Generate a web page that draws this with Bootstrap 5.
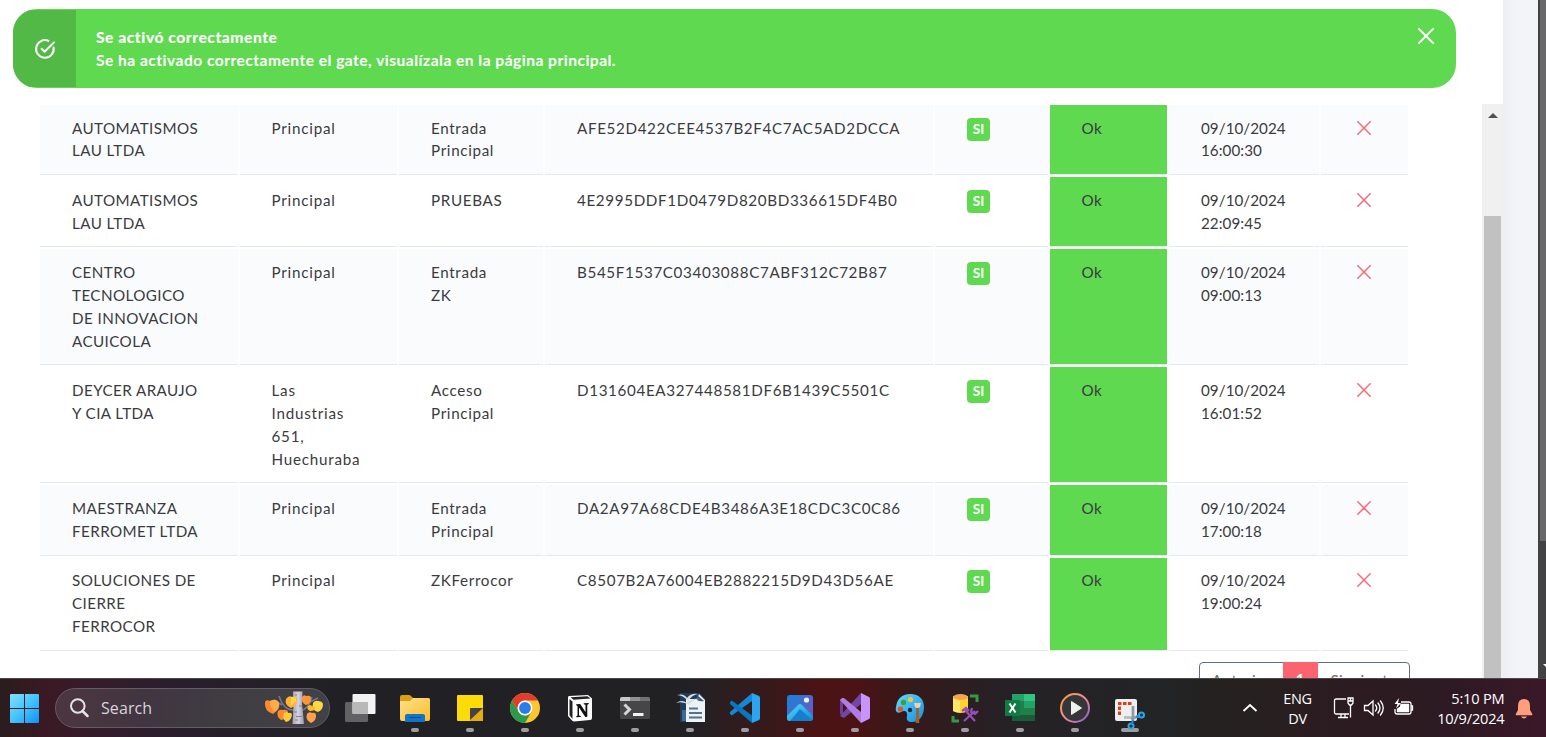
<!DOCTYPE html>
<html lang="es">
<head>
<meta charset="utf-8">
<meta name="viewport" content="width=device-width, initial-scale=1">
<title>Gates</title>
<link href="https://cdn.jsdelivr.net/npm/bootstrap@5.3.0/dist/css/bootstrap.min.css" rel="stylesheet">
<style>
body{font-family:Lato,"Open Sans",sans-serif;font-size:15.2px;line-height:22.9px;color:#3a3b40;background:#fff}
.screen{width:1546px;height:737px;overflow:hidden}
.viewport{height:678px;overflow:hidden}
.page-col{width:1482px}
.notice{margin:9px 0 0 13px;width:1443px;height:79px;border-radius:24px;background:#5fda50;color:#fff;padding:1px 0;overflow:hidden;font-size:15.6px}
.notice-icon{width:63px;background:#52b946}
.notice-text{padding:16px 0 0 20px}
.notice-title{font-weight:900;letter-spacing:.54px}
.notice-body{font-weight:700;letter-spacing:.47px}
.notice-close{margin:18px 22px 0 0;width:16px;height:16px}
.gates{border-collapse:separate;border-spacing:2px;width:1372px;margin:15px 0 0 38px;table-layout:fixed}
.gates td{padding:12px 0 0 32px;vertical-align:top;border-bottom:1px solid #e1e9f1;white-space:nowrap;letter-spacing:.42px}
.gates td:nth-child(2){padding-left:31.5px;letter-spacing:.78px}
.gates td:nth-child(3){letter-spacing:.66px}
.gates td:nth-child(6){padding-left:31.5px}
.gates td:nth-child(7){letter-spacing:.05px}
.gates .serial{letter-spacing:.64px}
.gates tr:first-child td{line-height:22.3px}
.gates tr:last-child td{padding-top:11px}
.gates tr:nth-child(odd) td{background:#fafbfd}
.gates .state,.gates tr:nth-child(odd) .state{background:#5fda50}
.h2l{height:70px}.h2x{height:71px}.h3l{height:93px}.h4l{height:116px}
.gates .yes{display:inline-block;width:23px;height:23px;border-radius:4px;background:#5fda50;color:#fff;font-size:13.6px;font-weight:700;line-height:22px;text-align:center;letter-spacing:0;margin-top:1px}
.gates svg{display:block;margin:4px 0 0 3.5px}
.pager{width:211px;margin:9px 0 0 1199px;height:38px;border:1px solid #5f6f84;border-radius:4px;line-height:34px;color:#6a6f78;letter-spacing:.5px}
.pager .now{width:35px;margin-top:-1px;height:38px;background:#fa6370;color:#fff;font-weight:700}
.pager .side-a{width:83px}.pager .side-b{width:91px}
.inner-scroll{width:21px;margin-top:104px;background:#f0f0f0;height:574px;padding:0 2px}
.inner-arrow{height:112px;padding:9px 0 0 3.5px}
.inner-thumb{width:17px;height:470px;background:#c1c1c1}
.page-edge{width:35px;background:linear-gradient(90deg,#edeef4,#f2f4fa 12px)}
.outer-scroll{width:8px;background:#424242;padding-left:2px}
.outer-thumb{height:541px;background:#686868}
.outer-tip{margin:123px 0 0 3px}
.taskbar{height:59px;border-top:1px solid #4b484b;color:#fff;font-family:"Open Sans","Noto Sans",sans-serif;background:linear-gradient(90deg,#2a1c1f 0,#3a1923 45px,#321c2c 110px,#281f2c 190px,#212125 330px,#212124 690px,#38191a 770px,#4b1314 820px,#4b1314 855px,#35191b 910px,#262125 1000px,#222426 1160px,#25211f 1230px,#2b1c21 1330px,#2d1a22 1450px,#3b1829 1546px)}
.start{margin:15px 16px 0 10px}
.searchbox{width:275px;height:40px;margin-top:9px;border:1px solid #645b64;border-radius:20px;background:linear-gradient(90deg,#4c3640,#413541 90px,#3f3d42 170px,#414246)}
.searchbox .lens{margin:0 12px 0 13px}
.searchbox span{font-size:16px;color:#d8d4d8;letter-spacing:.1px;padding-top:1px}
.searchbox .tree{margin-left:auto;margin-right:5px}
.apps{margin-left:2.5px;width:825.5px}
.app{width:55.03px;padding-top:13px}
.app svg{width:32px;height:32px;overflow:visible;flex:none}
.dot{width:8px;height:4px;border-radius:2px;background:#a09da0;margin-top:4px;flex:none}
.dot.wide{width:18px}
.snip{z-index:1}
.tray{font-size:14.3px;line-height:20px}
.tray svg{flex:none}
.chev{margin:24px 0 0 83.5px}
.lang{width:40px;margin:10px 15px 0 20px;letter-spacing:-.3px;font-size:14.5px}
.net{margin:18px 9px 0 0}.vol{margin:18px 8px 0 -1px}.batt{margin:18px 0 0}
.clock{width:90px;margin-top:9px;letter-spacing:-.2px;font-size:14.6px}
.bell{margin:20px 0 0 10px}
</style>
</head>
<body>
<svg width="0" height="0" class="position-absolute">
<defs>
<linearGradient id="win" x1="0" y1="0" x2="1" y2="1"><stop stop-color="#7fe0ff"/><stop offset=".5" stop-color="#45c3fb"/><stop offset="1" stop-color="#0d92f8"/></linearGradient>
<linearGradient id="fold" x1="0" y1="0" x2="1" y2="1"><stop stop-color="#ffe08a"/><stop offset="1" stop-color="#f8be2c"/></linearGradient>
<linearGradient id="photo" x1="0" y1="0" x2="1" y2="1"><stop stop-color="#1583dc"/><stop offset="1" stop-color="#7c52b8"/></linearGradient>
<linearGradient id="hill" x1="0" y1="0" x2="1" y2="1"><stop stop-color="#52dcfa"/><stop offset="1" stop-color="#1186dc"/></linearGradient>
<linearGradient id="ring" x1="0" y1="0" x2="1" y2="1"><stop stop-color="#ff9b3d"/><stop offset=".5" stop-color="#e89090"/><stop offset="1" stop-color="#8a58d8"/></linearGradient>
<linearGradient id="pal" x1="0" y1="0" x2="1" y2="1"><stop stop-color="#64d8fb"/><stop offset="1" stop-color="#1590e0"/></linearGradient>
<linearGradient id="trunk"><stop stop-color="#a8a4b8"/><stop offset=".5" stop-color="#d6d3e0"/><stop offset="1" stop-color="#9b97ac"/></linearGradient>
<symbol id="cross" viewBox="0 0 14 14"><path d="M.8.8l12.4 12.4M13.2.8.8 13.2" fill="none" stroke="#fb6a76" stroke-width="1.5" stroke-linecap="round"/></symbol>
</defs>
</svg>
<div class="screen d-flex flex-column">
<main class="viewport d-flex">
 <section class="page-col">
  <div class="notice d-flex">
   <div class="notice-icon d-flex align-items-center justify-content-center"><svg width="22" height="22" viewBox="0 0 22 22" fill="none" stroke="#fff" stroke-width="2" stroke-linecap="round" stroke-linejoin="round"><path d="M19.6 9.6a8.8 8.8 0 1 1-5.1-6.7M7.6 10.8l3 3L20 4.4"/></svg></div>
   <div class="notice-text flex-grow-1"><div class="notice-title">Se activó correctamente</div><div class="notice-body">Se ha activado correctamente el gate, visualízala en la página principal.</div></div>
   <svg class="notice-close" viewBox="0 0 16 16"><path d="M1 1l14 14M15 1 1 15" stroke="#fff" stroke-width="1.8" stroke-linecap="round"/></svg>
  </div>
  <table class="gates">
   <colgroup><col style="width:198px"><col style="width:157px"><col style="width:144px"><col style="width:388px"><col style="width:113px"><col style="width:117px"><col style="width:150px"><col style="width:87px"></colgroup>
   <tbody>
   <tr class="h2l"><td>AUTOMATISMOS<br>LAU LTDA</td><td>Principal</td><td>Entrada<br>Principal</td><td class="serial">AFE52D422CEE4537B2F4C7AC5AD2DCCA</td><td><span class="yes">SI</span></td><td class="state">Ok</td><td>09/10/2024<br>16:00:30</td><td><svg width="14" height="14"><use href="#cross"/></svg></td></tr>
   <tr class="h2l"><td>AUTOMATISMOS<br>LAU LTDA</td><td>Principal</td><td>PRUEBAS</td><td class="serial">4E2995DDF1D0479D820BD336615DF4B0</td><td><span class="yes">SI</span></td><td class="state">Ok</td><td>09/10/2024<br>22:09:45</td><td><svg width="14" height="14"><use href="#cross"/></svg></td></tr>
   <tr class="h4l"><td>CENTRO<br>TECNOLOGICO<br>DE INNOVACION<br>ACUICOLA</td><td>Principal</td><td>Entrada<br>ZK</td><td class="serial">B545F1537C03403088C7ABF312C72B87</td><td><span class="yes">SI</span></td><td class="state">Ok</td><td>09/10/2024<br>09:00:13</td><td><svg width="14" height="14"><use href="#cross"/></svg></td></tr>
   <tr class="h4l"><td>DEYCER ARAUJO<br>Y CIA LTDA</td><td>Las<br>Industrias<br>651,<br>Huechuraba</td><td>Acceso<br>Principal</td><td class="serial">D131604EA327448581DF6B1439C5501C</td><td><span class="yes">SI</span></td><td class="state">Ok</td><td>09/10/2024<br>16:01:52</td><td><svg width="14" height="14"><use href="#cross"/></svg></td></tr>
   <tr class="h2x"><td>MAESTRANZA<br>FERROMET LTDA</td><td>Principal</td><td>Entrada<br>Principal</td><td class="serial">DA2A97A68CDE4B3486A3E18CDC3C0C86</td><td><span class="yes">SI</span></td><td class="state">Ok</td><td>09/10/2024<br>17:00:18</td><td><svg width="14" height="14"><use href="#cross"/></svg></td></tr>
   <tr class="h3l"><td>SOLUCIONES DE<br>CIERRE<br>FERROCOR</td><td>Principal</td><td>ZKFerrocor</td><td class="serial">C8507B2A76004EB2882215D9D43D56AE</td><td><span class="yes">SI</span></td><td class="state">Ok</td><td>09/10/2024<br>19:00:24</td><td><svg width="14" height="14"><use href="#cross"/></svg></td></tr>
   </tbody>
  </table>
  <div class="pager d-flex text-center"><div class="side-a">Anterior</div><div class="now">1</div><div class="side-b">Siguiente</div></div>
 </section>
 <div class="inner-scroll"><div class="inner-arrow"><svg width="10" height="6" class="d-block"><path d="M0 5 5 0l5 5z" fill="#505050"/></svg></div><div class="inner-thumb"></div></div>
 <div class="page-edge"></div>
 <div class="outer-scroll"><div class="outer-thumb"></div><svg class="outer-tip d-block" width="3" height="3"><path d="M0 0h3v3z" fill="#fff"/></svg></div>
</main>
<footer class="taskbar d-flex">
 <svg class="start" width="29" height="29" viewBox="0 0 29 29"><path d="M1 0h13v14H0V1q0-1 1-1zM15 0h13q1 0 1 1v13H15zM0 15h14v14H1q-1 0-1-1zM15 15h14v13q0 1-1 1H15z" fill="url(#win)"/></svg>
 <div class="searchbox d-flex align-items-center">
  <svg class="lens" width="20" height="20" viewBox="0 0 20 20" fill="none" stroke="#e4e2e6" stroke-width="2"><circle cx="8.8" cy="8" r="6.8"/><path d="m13.5 13 5 5" stroke-width="2.5" stroke-linecap="round"/></svg>
  <span>Search</span>
  <svg class="tree" width="60" height="34" viewBox="0 0 60 34"><path d="M30 19Q20 20 15 5M18 14l-5-3M36 20q9-2 12-14M46 11l8-4" fill="none" stroke="#77778c" stroke-width="1.500"/><path d="M29 .5h9.500l-.5 12 2 20.500H28.500l1-18z" fill="url(#trunk)"/><path d="M31 8h2M35 15h3M30 21h3M32 25.500h6M31 4h2M31 29h3" stroke="#85819a"/><path d="M1 11Q2 8 6 10 12 6 15 12q2 6-6 11Q0 20 1 11z" fill="#fb8a35"/><path d="M6 10q7-3 9 2 1 5-5 9Q6 16 6 10z" fill="#ffac4a"/><path d="M22 8q3-4 6-2 5-2 5 3 0 6-6 8-7-3-5-9z" fill="#ffb52c"/><path d="M27 6q6-1 5 4l-5 5z" fill="#ffd24f"/><path d="M14 20q2-2 5-1 5-1 5 3 0 6-7 7-5-3-3-9z" fill="#ff8a34"/><path d="M20 22q3-2 4 0 4-1 4 2-1 6-6 7-4-3-2-9z" fill="#ffca37"/><path d="M38 6q2-3 4-1 5-1 5 2 0 6-5 7-5-2-4-8z" fill="#ff9634"/><path d="M49 12q2-3 5-2 4 0 5 3 0 6-5 8-7-2-5-9z" fill="#ffd644"/><path d="M44 15q2-2 4 0 3 0 3 2 0 3-5 3-4-2-2-5z" fill="#f7bd2c"/><path d="M43 23q2-3 5-1 4-1 4 3 0 5-5 7-6-3-4-9z" fill="#ffa04c"/></svg>
 </div>
 <div class="apps d-flex">
  <div class="app d-flex flex-column align-items-center"><svg viewBox="-16 -16 32 32"><rect x="-15" y="-6" width="23" height="20" rx="1.500" fill="#626164"/><rect x="-7.500" y="-14" width="23" height="20" rx="1" fill="#f2f2f2"/><path d="M-7.500-6H8V6H-6.500q-1 0-1-1z" fill="#b8b8b9"/></svg></div>
  <div class="app d-flex flex-column align-items-center"><svg viewBox="-16 -16 32 32"><path d="M-15-11q0-2 2-2h7q1 0 2 1l2 2h15q2 0 2 2V0h-30z" fill="#dda012"/><path d="M-15-7h10l3-3h15q2 0 2 2v19q0 2-2 2h-26q-2 0-2-2z" fill="url(#fold)"/><path d="M-10 14V8q0-2 2-2H8q2 0 2 2v6z" fill="#1273c8"/><path d="M-6 9.500H6" stroke="#084c91"/></svg><div class="dot"></div></div>
  <div class="app d-flex flex-column align-items-center"><svg viewBox="-16 -16 32 32"><path d="M-13-12q0-1 1-1h24q1 0 1 1V0L0 13h-12q-1 0-1-1z" fill="#fcdc08"/><path d="M0 0h13v13H0z" fill="#e5ac12"/><path d="M0 12V1q0-1 1-1h12z" fill="#444247"/></svg><div class="dot"></div></div>
  <div class="app d-flex flex-column align-items-center"><svg viewBox="-16 -16 32 32"><circle r="15" fill="#fbc72e"/><path d="M-13-7.500A15 15 0 0 1 13-7.500H0a7.500 7.500 0 0 0-6.500 11.200z" fill="#e33b2e"/><path d="M-13-7.500A15 15 0 0 0 0 15L6.500 3.800a7.500 7.500 0 0 1-13 0z" fill="#2c9a4b"/><circle r="7.400" fill="#fff"/><circle r="5.900" fill="#2b7bea"/></svg><div class="dot"></div></div>
  <div class="app d-flex flex-column align-items-center"><svg viewBox="-16 -16 32 32"><path d="M-11-12 8-13l4 3.500V10q0 2-2 2l-16 1.500q-1 0-2-1L-12 8v-18q0-2 1-2z" fill="#fff"/><path d="M-9.500-10.800 7.500-11.700 10.500-9.400-6.500-8.200zM-10.500-9l3 2.500V11l-3-3.700z" fill="#222"/><path d="M-6.500-6.500 10.500-7.800V10.500L-6.500 11.800z" fill="#fff"/><path d="M-3.800-3.800l4-.3L5.500 4v-7.200l-1.800-.6v-.9l5-.3v.9l-1.400.8V8.800l-2 .1L-1-.5V7.500l1.800.6v.8l-4.600.3v-.8l1.300-.8v-9.600l-1.300-.8z" fill="#111"/></svg><div class="dot"></div></div>
  <div class="app d-flex flex-column align-items-center"><svg viewBox="-16 -16 32 32"><rect x="-15" y="-11" width="30" height="22" rx="1.500" fill="#464648"/><path d="M-15-7v-2q0-2 2-2h8v4z" fill="#c8c8c9"/><path d="M-5-11H5v4H-5z" fill="#929294"/><path d="M5-11h8q2 0 2 2v2H5z" fill="#727274"/><path d="m-10.500-3.500 5 5-5 5" fill="none" stroke="#d4d4d5" stroke-width="3"/><path d="M-2 6.500H8.500" stroke="#f1f1f1" stroke-width="3"/></svg><div class="dot"></div></div>
  <div class="app d-flex flex-column align-items-center"><svg viewBox="-16 -16 32 32"><path d="M-10-15H10l5 6v23H-10z" fill="#203b58"/><path d="M-4-9H7l2-5 6 6v22H-4z" fill="#eef2f4"/><path d="M-8 2h4v11h-4z" fill="#416a91"/><path d="M7-13 14-7q-4 1-7-1z" fill="#385d7c"/><path d="M-1 .5H8M-1 5H12M-1 9.500H12" stroke="#53728b" stroke-width="2"/><path d="M-13-13q7-2 10 3 4-5 11-4-6 1-10 7-5-6-11-6zM-14-5q6-4 11 0 4-5 12-4-7 1-10 6-6-4-13-2z" fill="#d6dfe2"/></svg><div class="dot"></div></div>
  <div class="app d-flex flex-column align-items-center"><svg viewBox="-16 -16 32 32"><path d="M-12.500 7q-1 .5-1.500 0l-1-1.500q-.5-1 0-1.500L7-15v8z" fill="#1488d4"/><path d="M-12.500-7q-1-.5-1.500 0l-1 1.500q-.5 1 0 1.500L7 15V7.500z" fill="#0877bf"/><path d="m7-15 7 3q1 .5 1 2v20q0 1.500-1 2L7 15z" fill="#2ba4f2"/></svg><div class="dot"></div></div>
  <div class="app d-flex flex-column align-items-center"><svg viewBox="-16 -16 32 32"><rect x="-13" y="-13" width="26" height="26" rx="3" fill="url(#photo)"/><path d="M-13 8-2-3q2-2 4 0l11 11v2q0 3-3 3h-20q-3 0-3-3z" fill="url(#hill)"/><path d="M0 1 12 12q-1 1-2 1h-20z" fill="#147fce"/><circle cx="6.500" cy="-8" r="2.600" fill="#f1efff"/></svg><div class="dot"></div></div>
  <div class="app d-flex flex-column align-items-center"><svg viewBox="-16 -16 32 32"><path d="m-15-8 3-2v18l-3-2z" fill="#6e3f9e"/><path d="M6-15v11L-11 10l-4-2L4-13z" fill="#7246a5"/><path d="m-13-10 2 0L6 4v11L-15-8z" fill="#b17be4"/><path d="m6-15 8 4q1 .5 1 2V9q0 1.500-1 2l-8 4z" fill="#c894fa"/></svg><div class="dot"></div></div>
  <div class="app d-flex flex-column align-items-center"><svg viewBox="-16 -16 32 32"><path d="M0-14C10-14 14-8 14-1c0 9-5 15-12 15C-2 14-4 12-3 8c1-5-3-6-6-4-4 2-6-1-5-5C-13-9-8-14 0-14z" fill="url(#pal)"/><circle cy="2" r="2.200" fill="#202a38"/><circle cx="-9.500" cy="1" r="2.600" fill="#e5512b"/><circle cx="-6.500" cy="-5.500" r="2.700" fill="#35a338"/><circle cx=".5" cy="-8.500" r="2.600" fill="#f9c431"/><path d="M4-5h7l-1 4q-2.500 2-5 0z" fill="#efd0ac"/><path d="M6.200 0h2.600l.5 15H5.700z" fill="#a75f22"/></svg><div class="dot"></div></div>
  <div class="app d-flex flex-column align-items-center"><svg viewBox="-16 -16 32 32"><path d="M-12-12H3V3q-7 4-15 0z" fill="#ffd52b"/><path d="M-12-11h7V4.500q-4 0-7-1.500z" fill="#ffe76b"/><ellipse cx="-4.500" cy="-11" rx="7.500" ry="3" fill="#f2a44e"/><path d="M5-12h7v6M-12 8v5h6" fill="none" stroke="#359944" stroke-width="3"/><path d="M-3 3 1 0l3 3M0 2 10 13M10 3-1 13M7 0l-1 4 4 2 3-3" fill="none" stroke="#9550bb" stroke-width="2.200"/></svg><div class="dot"></div></div>
  <div class="app d-flex flex-column align-items-center"><svg viewBox="-16 -16 32 32"><path d="M-8-13q0-1 1-1h21q1 0 1 1v25q0 1-1 1H-7q-1 0-1-1z" fill="#217f4a"/><path d="M4-14h10q1 0 1 1v6H4z" fill="#34c481"/><path d="M-8-7V-13q0-1 1-1H4v7z" fill="#23a366"/><path d="M4-7h11v7H4z" fill="#22a266"/><path d="M-8 7h23v5q0 1-1 1H-7q-1 0-1-1z" fill="#185c38"/><rect x="-15" y="-8" width="15" height="16" rx="1" fill="#107b42"/><path d="m-10.500-4.500 6 9M-4.500-4.500l-6 9" stroke="#fff" stroke-width="2"/></svg><div class="dot"></div></div>
  <div class="app d-flex flex-column align-items-center"><svg viewBox="-16 -16 32 32"><circle r="14" fill="#363639" stroke="url(#ring)" stroke-width="2"/><path d="M-3.500-6.500 6.500 0-3.500 6.500z" fill="#f1f1f1" stroke="#f1f1f1" stroke-linejoin="round"/></svg><div class="dot"></div></div>
  <div class="app d-flex flex-column align-items-center"><svg class="snip" viewBox="-16 -16 32 32"><rect x="-15" y="-9" width="22" height="22" rx="2" fill="#f0eeef"/><path d="M-10.500 7V-4.500H2" fill="none" stroke="#d9411e" stroke-width="3" stroke-dasharray="3.500 1.500"/><path d="M3-2V9.500H-6" fill="none" stroke="#b3b7be" stroke-width="2.500"/><path d="M3-2V13M1 11 9 8" stroke="#8d9aaa" stroke-width="2.500"/><circle cx="1" cy="18" r="2.500" fill="none" stroke="#26a6ed" stroke-width="2"/><circle cx="11.500" cy="7" r="2.500" fill="none" stroke="#26a6ed" stroke-width="2"/><path d="m3 12-1 4M6 9l3-1" stroke="#168de0" stroke-width="2"/></svg><div class="dot wide"></div></div>
 </div>
 <div class="tray d-flex">
  <svg class="chev" width="16" height="10" viewBox="0 0 16 10"><path d="m1.500 8 6.500-6 6.500 6" fill="none" stroke="#fff" stroke-width="1.900"/></svg>
  <div class="lang text-center">ENG<br>DV</div>
  <svg class="net" width="22" height="22" viewBox="0 0 22 22" fill="none" stroke="#fff" stroke-width="1.300"><path d="M13 2H3Q1.500 2 1.500 3.500v12q0 1.500 1.500 1.500h13M5 20.500h10M8 17v3M12 17v3M17.500 8v12.500"/><path d="M15 1h5v5l-1.500 2h-2L15 6zM15 4h5M17.500 4v-3"/></svg>
  <svg class="vol" width="22" height="22" viewBox="0 0 22 22" fill="none" stroke="#fff" stroke-width="1.300" stroke-linecap="round"><path d="M1.500 8.500H5l5-4.500v14l-5-4.500H1.500zM12.500 8q2.500 3 0 6M15 6q4 5 0 10M17.500 4q5.500 7 0 14"/></svg>
  <svg class="batt" width="22" height="22" viewBox="0 0 22 22" fill="none" stroke="#fff" stroke-width="1.300"><path d="M8 5h8q2 0 2 2v8q0 2-2 2H4q-2 0-2-2v-3M18 9h1.500v4H18"/><path d="M8 7.500h7.500v7H4.500V12l3-2z" fill="#fff"/><path d="M6 1 1.500 7h3L3 11.500 8 6H5z" fill="#fff" stroke="none"/></svg>
  <div class="clock text-end">5:10 PM<br>10/9/2024</div>
  <svg class="bell" width="18" height="20" viewBox="0 0 18 20"><path d="M9 0Q3 0 3 7v4L.8 15q-.3 1.300 1 1.300h14.500q1.300 0 1-1.300L15 11V7q0-7-6-7zM6 17.500h6q-1 2-3 2t-3-2z" fill="#ff9e7b"/></svg>
 </div>
</footer>
</div>
<script src="https://cdn.jsdelivr.net/npm/bootstrap@5.3.0/dist/js/bootstrap.bundle.min.js"></script>
</body>
</html>
